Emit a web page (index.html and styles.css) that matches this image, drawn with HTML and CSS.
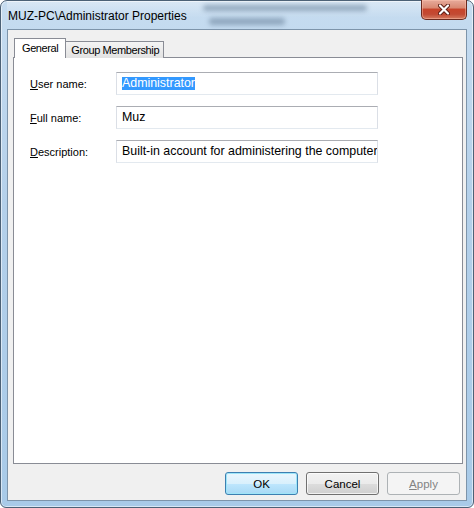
FILE: index.html
```html
<!DOCTYPE html>
<html lang="en">
<head>
    <meta charset="UTF-8">
    <title>MUZ-PC\Administrator Properties</title>
    <link rel="stylesheet" href="styles.css">
</head>
<body>
    <div class="window">
        <div class="titlebar">
            <!-- blurred desktop showing through the glass -->
            <span class="smudge smudge-1"></span>
            <span class="smudge smudge-2"></span>
            <span class="title">MUZ-PC\Administrator Properties</span>
            <button class="close" type="button">
                <svg width="12" height="11" viewBox="0 0 12 11">
                    <path d="M2 1.5 L10 9.5 M10 1.5 L2 9.5" stroke="#5a1d14" stroke-width="4" stroke-linecap="round"/>
                    <path d="M2 1.5 L10 9.5 M10 1.5 L2 9.5" stroke="#ffffff" stroke-width="2.2" stroke-linecap="round"/>
                </svg>
            </button>
        </div>

        <div class="client">
            <div class="tabs">
                <div class="tab active">General</div>
                <div class="tab">Group Membership</div>
            </div>

            <div class="panel">
                <div class="field">
                    <label for="userName"><u>U</u>ser name:</label>
                    <div class="textbox" id="userName"><span class="selected">Administrator</span></div>
                </div>
                <div class="field">
                    <label for="fullName"><u>F</u>ull name:</label>
                    <div class="textbox" id="fullName">Muz</div>
                </div>
                <div class="field">
                    <label for="description"><u>D</u>escription:</label>
                    <div class="textbox" id="description">Built-in account for administering the computer</div>
                </div>
            </div>

            <div class="buttons">
                <button class="btn default" type="button">OK</button>
                <button class="btn" type="button">Cancel</button>
                <button class="btn" type="button" disabled><u>A</u>pply</button>
            </div>
        </div>
    </div>
</body>
</html>
```

FILE: styles.css
```css
body {
    margin: 0;
    font-family: 'Liberation Sans', Arial, sans-serif;
    font-size: 11px;
    color: #000;
    background: #ffffff;
}
.window {
    width: 474px;
    height: 508px;
    box-sizing: border-box;
    border: 1px solid #4c6176;
    border-radius: 7px 7px 6px 6px;
    padding: 0 6px 6px 6px;
    display: flex;
    flex-direction: column;
    background: linear-gradient(to bottom, #c6dcf0 0%, #b4d0ea 40%, #a8cae8 100%);
    box-shadow: inset 0 0 0 1px rgba(255, 255, 255, 0.55);
}
.titlebar {
    position: relative;
    flex-shrink: 0;
    height: 28px;
    display: flex;
    align-items: flex-start;
    justify-content: space-between;
    padding-left: 1px;
    background: linear-gradient(to bottom, rgba(255,255,255,0.35), rgba(255,255,255,0) 60%);
}
.title {
    position: relative;
    font-size: 12px;
    line-height: 14px;
    padding-top: 8px;
    color: #000;
}
.smudge {
    position: absolute;
    background: #7890a8;
    border-radius: 3px;
    filter: blur(2.5px);
    opacity: 0.7;
}
.smudge-1 {
    left: 196px;
    top: 4px;
    width: 164px;
    height: 6px;
}
.smudge-2 {
    left: 202px;
    top: 17px;
    width: 76px;
    height: 7px;
}
.close {
    position: relative;
    width: 46px;
    height: 20px;
    margin: -1px 0 0 0;
    padding: 0;
    border: 1px solid #6a2a1f;
    border-top: none;
    border-radius: 0 0 5px 5px;
    background: linear-gradient(to bottom, #e7ab9c 0%, #d98a74 40%, #c7442b 50%, #c24a33 75%, #d57b60 100%);
    box-shadow: inset 0 0 0 1px rgba(255, 200, 180, 0.45);
    display: flex;
    align-items: center;
    justify-content: center;
}
.client {
    flex: 1;
    min-height: 0;
    border: 1px solid #7d94aa;
    background: #f0f0f0;
    padding: 0 3px 0 5px;
    display: flex;
    flex-direction: column;
}
.tabs {
    display: flex;
    align-items: flex-end;
    padding: 8px 0 0 1px;
    margin-bottom: -1px;
    position: relative;
    letter-spacing: -0.4px;
}
.tab {
    border: 1px solid #898c95;
    border-bottom: none;
    padding: 0 4px 0 5px;
    height: 16px;
    line-height: 17px;
    background: linear-gradient(to bottom, #f4f4f4, #e2e2e2);
}
.tab + .tab {
    border-left: none;
}
.tab.active {
    height: 19px;
    line-height: 18px;
    padding: 0 7px;
    background: #ffffff;
    position: relative;
    z-index: 1;
}
.panel {
    box-sizing: border-box;
    height: 407px;
    flex-shrink: 0;
    border: 1px solid #898c95;
    background: #ffffff;
    padding: 14px 0 0 16px;
}
.field {
    display: flex;
    align-items: center;
    margin-bottom: 11px;
}
.field label {
    width: 86px;
}
.textbox {
    width: 250px;
    height: 21px;
    line-height: 21px;
    padding: 0 5px;
    font-size: 12.4px;
    border: 1px solid #abadb3;
    border-color: #abadb3 #dbdfe6 #e3e9ef #dbdfe6;
    white-space: nowrap;
    overflow: hidden;
    background: #fff;
}
.selected {
    background: #3399ff;
    color: #fff;
    display: inline-block;
    line-height: 13px;
}
.buttons {
    display: flex;
    justify-content: flex-end;
    gap: 8px;
    padding: 8px 3px 0 0;
}
.btn {
    width: 73px;
    height: 23px;
    padding: 0;
    font-family: 'Liberation Sans', Arial, sans-serif;
    font-size: 11.5px;
    color: #000;
    border: 1px solid #707070;
    border-radius: 3px;
    background: linear-gradient(to bottom, #f2f2f2 0%, #ebebeb 50%, #dddddd 51%, #cfcfcf 100%);
    box-shadow: inset 0 0 0 1px rgba(255, 255, 255, 0.7);
}
.btn.default {
    border-color: #3c7fb1;
    background: linear-gradient(to bottom, #eaf6fd 0%, #d9f0fc 50%, #bee6fd 51%, #a7d9f5 100%);
    box-shadow: inset 0 0 0 1px #9ee5f8;
}
.btn:disabled {
    border-color: #adb2b5;
    background: #f4f4f4;
    color: #838383;
    box-shadow: none;
}
```
